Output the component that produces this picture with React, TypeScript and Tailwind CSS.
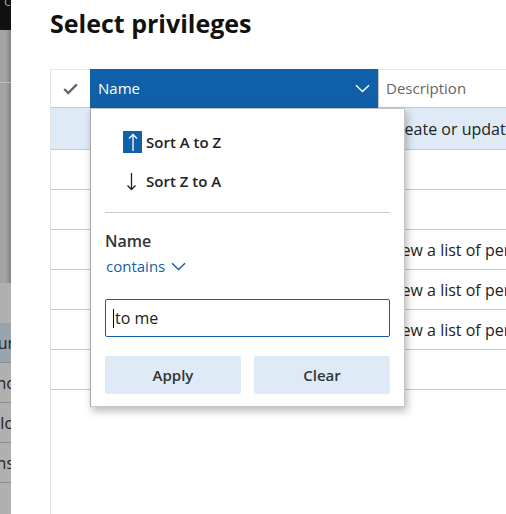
import React from "react";

const rows = [
  { text: "Create or update a record", sel: true },
  { text: "", sel: false },
  { text: "", sel: false },
  { text: "View a list of personal views", sel: false },
  { text: "View a list of personal views", sel: false },
  { text: "View a list of personal views", sel: false },
  { text: "", sel: false },
];

function Chevron({ className }: { className?: string }) {
  return (
    <svg width="15" height="9" viewBox="0 0 15 9" className={className} fill="none">
      <path d="M1 1.2 L7.5 7.6 L14 1.2" stroke="currentColor" strokeWidth="1.4" />
    </svg>
  );
}

export default function App() {
  return (
    <div className="flex h-[514px] w-[506px] overflow-hidden bg-white font-['Open_Sans','Noto_Sans',sans-serif]">
      {/* background page strip */}
      <div className="flex w-[11px] shrink-0 flex-col overflow-hidden bg-[#a4a4a4] shadow-[inset_-3px_0_3px_rgba(0,0,0,0.18)]">
        <div className="h-[30px] shrink-0 overflow-hidden bg-[#111] pl-[4px] text-[14px] leading-none text-[#9a9a9a]">
          <div className="-mt-[6px]">c</div>
        </div>
        <div className="h-[53px] shrink-0 border-b border-[#bdbdbd]" />
        <div className="h-[200px] shrink-0" />
        <div className="h-[40px] shrink-0 bg-[#b0b0b0]" />
        {["ur", "nc", "llo", "ns"].map((t, i) => (
          <div
            key={t}
            className={`flex h-[40px] shrink-0 items-center justify-end overflow-hidden border-b border-[#8c8c8c] text-[16px] text-[#222] ${
              i === 0 ? "bg-[#9aa4ae]" : "bg-[#b0b0b0]"
            }`}
          >
            <span className="-mr-[3px] whitespace-nowrap">{t}</span>
          </div>
        ))}
        <div className="flex-1 bg-[#b0b0b0]" />
      </div>

      {/* panel */}
      <div className="relative flex flex-1 flex-col overflow-hidden pl-[39px] pt-[8px]">
        <h1 className="h-[30px] text-[25px] font-bold leading-[30px] text-[#111]">Select privileges</h1>

        <div className="mt-[31px] flex w-[600px] flex-1 flex-col border-l border-[#e3e3e3]">
          {/* header */}
          <div className="flex h-[39px] shrink-0 border-b border-t border-b-[#c8c8c8] border-t-[#e6e6e6]">
            <div className="flex w-[39px] items-center justify-center">
              <svg width="15" height="12" viewBox="0 0 15 12" fill="none">
                <path d="M1.2 6 L5.2 10 L13.8 1.4" stroke="#666" strokeWidth="2.4" />
              </svg>
            </div>
            <div className="-mt-px -mb-px flex w-[288px] items-center justify-between bg-[#0f5fa9] pl-[8px] pr-[8px] text-[15px] text-white">
              <span>Name</span>
              <Chevron className="text-white" />
            </div>
            <div className="flex flex-1 items-center border-l border-[#c8c8c8] pl-[7px] text-[15px] text-[#666]">
              Description
            </div>
          </div>

          {rows.map((r, i) => (
            <div
              key={i}
              className={`flex shrink-0 items-center border-b border-[#c8c8c8] ${i === 0 ? "h-[42px]" : "h-[40px]"} ${
                r.sel ? "bg-[#deebf7]" : ""
              }`}
            >
              <div className="w-[39px]" />
              <div className="w-[288px]" />
              <div className="flex-1 whitespace-nowrap pl-[10px] text-[16px] text-[#222]">{r.text}</div>
            </div>
          ))}
        </div>

        {/* dropdown */}
        <div className="absolute left-[79px] top-[108px] flex h-[299px] w-[315px] flex-col border border-[#c4c4c4] border-l-[#a8a8a8] bg-white px-[14px] shadow-[2px_4px_8px_rgba(0,0,0,0.28)]">
          <div className="mt-[22px] flex h-[22px] items-center pl-[18px]">
            <div className="flex h-[22px] w-[19px] items-center justify-center bg-[#0f5fa9]">
              <svg width="10" height="19" viewBox="0 0 10 19" fill="none">
                <path d="M5 18 L5 1.5 M1 5.5 L5 1.5 L9 5.5" stroke="white" strokeWidth="1.3" />
              </svg>
            </div>
            <span className="ml-[4px] text-[15px] font-semibold text-[#222]">Sort A to Z</span>
          </div>
          <div className="mt-[17px] flex h-[22px] items-center pl-[21px]">
            <svg width="11" height="19" viewBox="0 0 11 19" fill="none">
              <path d="M5.5 1 L5.5 17.5 M1.5 13.5 L5.5 17.5 L9.5 13.5" stroke="#222" strokeWidth="1.3" />
            </svg>
            <span className="ml-[9px] text-[15px] font-semibold text-[#222]">Sort Z to A</span>
          </div>
          <div className="mt-[20px] h-px bg-[#c8c8c8]" />
          <div className="mt-[17px] text-[16px] font-semibold leading-[22px] text-[#333]">Name</div>
          <div className="mt-[3px] flex items-center gap-[6px] pl-px text-[15px] leading-[22px] text-[#0f5fa9]">
            <span>contains</span>
            <Chevron className="text-[#0f5fa9]" />
          </div>
          <div className="mt-[22px] flex h-[38px] items-center rounded-[2px] border border-[#0f5fa9] pl-[7px] text-[16px] text-[#222]">
            <span className="mr-px inline-block h-[19px] w-px bg-black" />
            <span>to me</span>
          </div>
          <div className="mt-[19px] flex gap-[13px]">
            <div className="flex h-[38px] flex-1 items-center justify-center rounded-[2px] bg-[#deebf7] text-[15px] font-semibold text-[#333]">
              Apply
            </div>
            <div className="flex h-[38px] flex-1 items-center justify-center rounded-[2px] bg-[#deebf7] text-[15px] font-semibold text-[#333]">
              Clear
            </div>
          </div>
        </div>
      </div>
    </div>
  );
}
